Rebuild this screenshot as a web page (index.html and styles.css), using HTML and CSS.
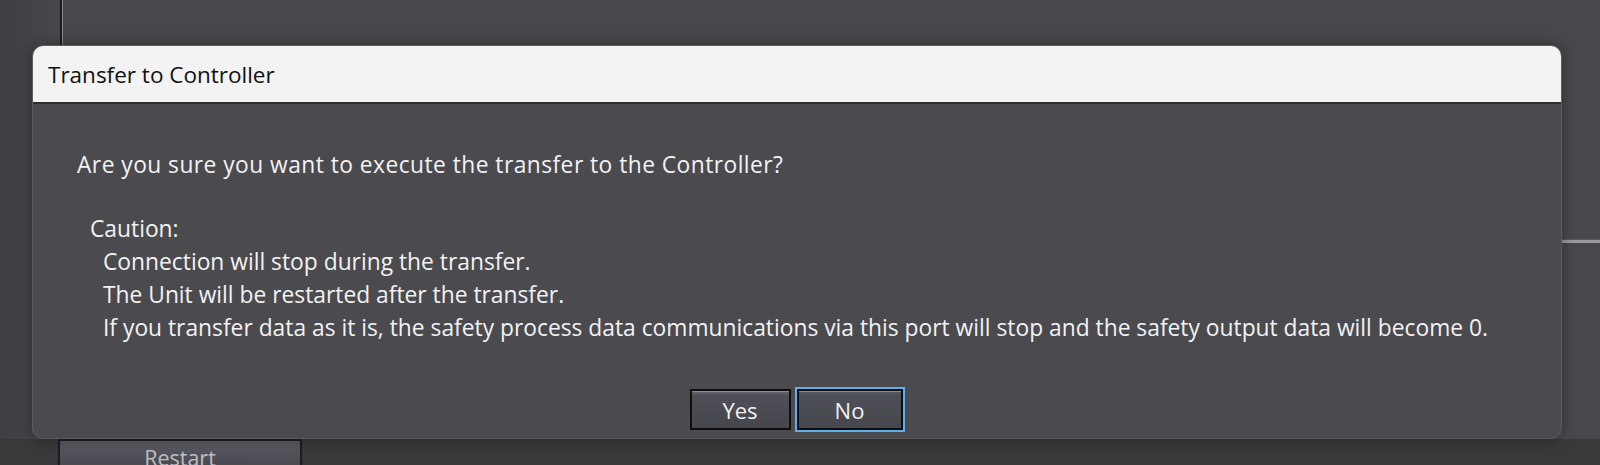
FILE: index.html
```html
<!DOCTYPE html>
<html lang="en">
<head>
    <meta charset="UTF-8">
    <title>Transfer to Controller</title>
    <link rel="stylesheet" href="styles.css">
</head>
<body>
    <div id="app">
        <div id="pane">
            <div id="pane_left"></div>
            <div id="pane_main">
                <div id="pane_rule"></div>
            </div>
        </div>
        <div id="footer">
            <button class="app_btn">Restart</button>
        </div>
    </div>

    <div id="dialog">
        <div id="dialog_title">Transfer to Controller</div>
        <div id="dialog_body">
            <p class="question">Are you sure you want to execute the transfer to the Controller?</p>
            <div class="caution">
                <div class="caution_head">Caution:</div>
                <div class="caution_line">Connection will stop during the transfer.</div>
                <div class="caution_line">The Unit will be restarted after the transfer.</div>
                <div class="caution_line">If you transfer data as it is, the safety process data communications via this port will stop and the safety output data will become 0.</div>
            </div>
            <div id="dialog_btns">
                <button class="dlg_btn">Yes</button>
                <button class="dlg_btn focus">No</button>
            </div>
        </div>
    </div>
</body>
</html>
```

FILE: styles.css
```css
body{
    margin: 0;
    width: 1600px;
    height: 465px;
    overflow: hidden;
    background-color: #48484c;
    font-family: "Open Sans", "Noto Sans", sans-serif;
    position: relative;
}
#app{
    height: 465px;
    display: flex;
    flex-direction: column;
}
#pane{
    flex: 1;
    display: flex;
}
#pane_left{
    width: 60px;
    border-right: 2px solid #1c1c1e;
    box-shadow: 1px 0 0 #8a8a8e;
    background: linear-gradient(to right, #3f3f43, #48484c);
}
#pane_main{
    flex: 1;
    padding-top: 239px;
    padding-left: 1500px;
}
#pane_rule{
    height: 3px;
    background-color: #9a9a9c;
    border-top: 1px solid #5a5a5e;
}
#footer{
    height: 26px;
    background-color: #39393c;
    padding-left: 58px;
}
.app_btn{
    width: 244px;
    height: 34px;
    border: 2px solid #1d1d20;
    background: linear-gradient(#5a5a62, #46464d);
    color: #bdbdc2;
    font-family: "Open Sans", sans-serif;
    font-size: 21.5px;
    padding: 0;
    line-height: 34px;
    vertical-align: top;
}

#dialog{
    position: absolute;
    left: 32px;
    top: 45px;
    width: 1528px;
    height: 392px;
    border: 1px solid #5c5c60;
    border-radius: 11px;
    overflow: hidden;
    background-color: #4a4a4f;
    box-shadow: 0 0 14px rgba(0, 0, 0, 0.35);
    display: flex;
    flex-direction: column;
}
#dialog_title{
    height: 56px;
    background-color: #f3f3f3;
    border-bottom: 2px solid #2e2e31;
    color: #111;
    font-size: 22.5px;
    line-height: 58px;
    padding-left: 15px;
}
#dialog_body{
    flex: 1;
    padding: 0 44px;
    color: #f2f2f2;
    font-size: 22.8px;
    display: flex;
    flex-direction: column;
}
.question{
    margin: 44px 0 0 0;
    line-height: 33px;
    letter-spacing: 0.45px;
}
.caution{
    margin-top: 31px;
    padding-left: 13px;
    line-height: 33px;
}
.caution_line{
    padding-left: 13px;
}
#dialog_btns{
    margin-top: auto;
    margin-bottom: 6px;
    display: flex;
    justify-content: center;
    gap: 4px;
}
.dlg_btn{
    width: 101px;
    height: 41px;
    border: 2px solid #0e0e10;
    background: linear-gradient(#686871, #4f4f57 12%, #46464d);
    box-shadow: inset 0 1px 0 #8a8a92;
    color: #f2f2f2;
    font-family: "Open Sans", sans-serif;
    font-size: 22px;
    padding: 0;
}
.dlg_btn.focus{
    width: 110px;
    height: 45px;
    outline: none;
    border: 2px solid #5fb0ea;
    box-shadow: inset 0 0 0 2px #0e0e10, inset 0 3px 0 #8a8a92;
    margin-top: -2px;
}
```
